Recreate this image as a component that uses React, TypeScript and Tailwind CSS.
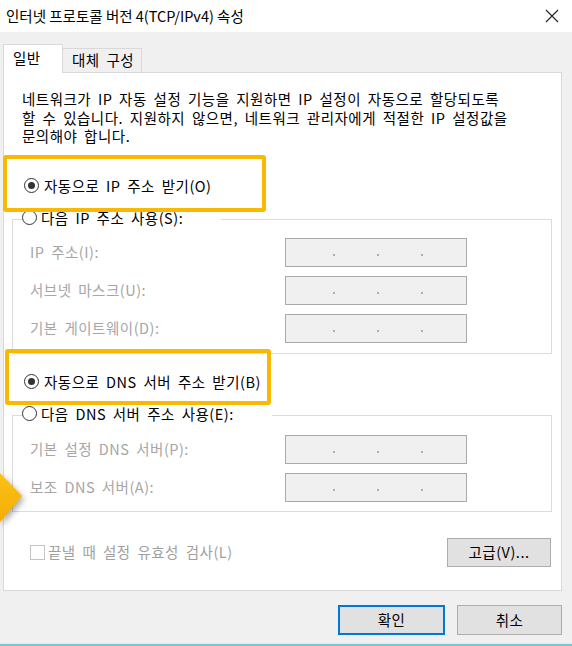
import React from "react";

const Radio = ({ checked }: { checked?: boolean }) => (
  <span className="w-[15px] h-[15px] rounded-full border border-[#333333] bg-white flex items-center justify-center shrink-0">
    {checked && <span className="w-[7px] h-[7px] rounded-full bg-[#333333]" />}
  </span>
);

const IpBox = () => (
  <div className="w-[182px] h-[29px] border border-[#a9a9a9] bg-[#f0f0f0] flex items-end pl-[47px] gap-[42px] pb-[10px]">
    <span className="w-[2px] h-[2px] bg-[#b0b0b0]" />
    <span className="w-[2px] h-[2px] bg-[#b0b0b0]" />
    <span className="w-[2px] h-[2px] bg-[#b0b0b0]" />
  </div>
);

const Row = ({ label }: { label: string }) => (
  <div className="flex items-center h-[29px]">
    <span className="w-[255px] text-[#a6a6a6]">{label}</span>
    <IpBox />
  </div>
);

const Group = ({ legend, rows, className }: { legend: string; rows: string[]; className: string }) => (
  <fieldset className={`ml-[8px] w-[540px] border border-[#dcdcdc] ${className}`}>
    <legend className="flex items-center gap-[4px] h-[22px] pb-[4px] pr-[38px] ml-[9px] leading-[18px] bg-white">
      <Radio />
      <span>{legend}</span>
    </legend>
    <div className="flex flex-col gap-[9px] pl-[17px]">
      {rows.map((r) => (
        <Row key={r} label={r} />
      ))}
    </div>
  </fieldset>
);

export default function App() {
  return (
    <div className="relative w-[572px] h-[646px] overflow-hidden bg-[#f0f0f0] text-[14.5px] tracking-[0.5px] [word-spacing:3px] text-black font-['Noto_Sans_CJK_KR','Malgun_Gothic',sans-serif]">
      <div className="h-[32px] bg-white flex items-center justify-between pl-[6px] pr-[13px]">
        <span className="text-[14.5px] tracking-normal [word-spacing:0px]">인터넷 프로토콜 버전 4(TCP/IPv4) 속성</span>
        <svg width="14" height="14" viewBox="0 0 14 14" className="text-[#222]">
          <path d="M1 1 L13 13 M13 1 L1 13" stroke="currentColor" strokeWidth="1.1" fill="none" />
        </svg>
      </div>

      <div className="flex items-end pt-[12px] pl-[3px]">
        <div className="relative z-10 w-[60px] h-[29px] -mb-px bg-white border border-b-0 border-[#d9d9d9] pl-[9px] leading-[26px]">
          일반
        </div>
        <div className="w-[79px] h-[24px] bg-[#f0f0f0] border border-l-0 border-b-0 border-[#d9d9d9] pl-[9px] leading-[22px]">
          대체 구성
        </div>
      </div>

      <div className="ml-[3px] w-[559px] h-[519px] bg-white border border-[#d9d9d9] flex flex-col">
        <p className="mt-[17px] px-[18px] leading-[18.5px]">
          네트워크가 IP 자동 설정 기능을 지원하면 IP 설정이 자동으로 할당되도록
          <br />
          할 수 있습니다. 지원하지 않으면, 네트워크 관리자에게 적절한 IP 설정값을
          <br />
          문의해야 합니다.
        </p>

        <div className="mt-[30px] ml-[20px] h-[20px] flex items-center gap-[5px]">
          <Radio checked />
          <span>자동으로 IP 주소 받기(O)</span>
        </div>

        <Group
          legend="다음 IP 주소 사용(S):"
          rows={["IP 주소(I):", "서브넷 마스크(U):", "기본 게이트웨이(D):"]}
          className="mt-[13px] pt-[7px] pb-[10px]"
        />

        <div className="mt-[18px] ml-[20px] h-[20px] flex items-center gap-[5px]">
          <Radio checked />
          <span>자동으로 DNS 서버 주소 받기(B)</span>
        </div>

        <Group
          legend="다음 DNS 서버 주소 사용(E):"
          rows={["기본 설정 DNS 서버(P):", "보조 DNS 서버(A):"]}
          className="mt-[13px] pt-[8px] pb-[9px]"
        />

        <div className="mt-[26px] ml-[26px] mr-[10px] flex items-center justify-between">
          <div className="flex items-center gap-[3px] text-[#a0a0a0]">
            <span className="w-[15px] h-[15px] border border-[#c4c4c4] bg-white" />
            <span>끝낼 때 설정 유효성 검사(L)</span>
          </div>
          <button className="w-[104px] h-[29px] bg-[#e1e1e1] border border-[#adadad]">고급(V)...</button>
        </div>
      </div>

      <div className="mt-[14px] pl-[338px] flex gap-[12px]">
        <button className="w-[107px] h-[30px] bg-[#e1e1e1] border-2 border-[#0078d7]">확인</button>
        <button className="w-[105px] h-[30px] bg-[#e1e1e1] border border-[#adadad]">취소</button>
      </div>

      <div className="absolute left-0 right-0 bottom-0 h-[3px] bg-[#7cc6d0] border-t border-[#d8eef1]" />

      <div className="absolute left-[3px] top-[155px] w-[263px] h-[57px] border-[4px] border-[#f8b900] rounded-[3px]" />
      <div className="absolute left-[5px] top-[349px] w-[266px] h-[56px] border-[4px] border-[#f8b900] rounded-[3px]" />

      <svg className="absolute left-0 top-[468px] drop-shadow-[2px_3px_3px_rgba(0,0,0,0.35)]" width="30" height="60" viewBox="0 0 30 60">
        <defs>
          <linearGradient id="arw" x1="0" y1="0" x2="0" y2="1">
            <stop offset="0" stopColor="#fbc21a" />
            <stop offset="1" stopColor="#f4ad00" />
          </linearGradient>
        </defs>
        <polygon points="0,5 22,28 0,54" fill="url(#arw)" />
      </svg>
    </div>
  );
}
